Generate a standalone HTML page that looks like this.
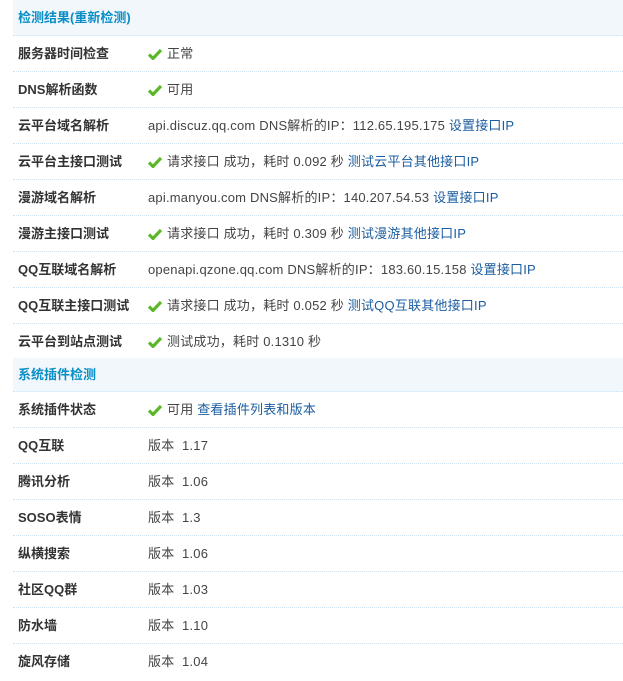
<!DOCTYPE html>
<html><head><meta charset="utf-8"><style>
body{margin:0;background:#fff;width:623px;height:681px;overflow:hidden;font-family:"Liberation Sans","Noto Sans CJK SC",sans-serif;font-size:13px;color:#444}
.wrap{position:absolute;left:13px;top:0;width:610px}
.h{background:#f2f7fc;height:36px;line-height:36px;padding-left:5px;font-weight:bold;color:#0a8ec6;border-bottom:1px dotted #cfe3f2;box-sizing:border-box}
.r{height:36px;line-height:35px;border-bottom:1px dotted #cfe3f2;box-sizing:border-box;position:relative}
.l{position:absolute;left:5px;font-weight:bold;color:#333}
.v{position:absolute;left:135px;color:#444;white-space:nowrap;letter-spacing:0.2px}
a{color:#1c5da0;text-decoration:none}
.ck{display:inline-block;width:14px;height:12px;vertical-align:-2px;margin-right:5px}
</style></head><body><div class="wrap">
<div class="h">检测结果(重新检测)</div>
<div class="r"><span class="l">服务器时间检查</span><span class="v"><svg class="ck" viewBox="0 0 14 12"><path d="M1 6.5L5 10.5L13 2" stroke="#5cb82a" stroke-width="3.2" fill="none"/></svg>正常</span></div>
<div class="r"><span class="l">DNS解析函数</span><span class="v"><svg class="ck" viewBox="0 0 14 12"><path d="M1 6.5L5 10.5L13 2" stroke="#5cb82a" stroke-width="3.2" fill="none"/></svg>可用</span></div>
<div class="r"><span class="l">云平台域名解析</span><span class="v">api.discuz.qq.com DNS解析的IP：112.65.195.175 <a>设置接口IP</a></span></div>
<div class="r"><span class="l">云平台主接口测试</span><span class="v"><svg class="ck" viewBox="0 0 14 12"><path d="M1 6.5L5 10.5L13 2" stroke="#5cb82a" stroke-width="3.2" fill="none"/></svg>请求接口 成功，耗时 0.092 秒 <a>测试云平台其他接口IP</a></span></div>
<div class="r"><span class="l">漫游域名解析</span><span class="v">api.manyou.com DNS解析的IP：140.207.54.53 <a>设置接口IP</a></span></div>
<div class="r"><span class="l">漫游主接口测试</span><span class="v"><svg class="ck" viewBox="0 0 14 12"><path d="M1 6.5L5 10.5L13 2" stroke="#5cb82a" stroke-width="3.2" fill="none"/></svg>请求接口 成功，耗时 0.309 秒 <a>测试漫游其他接口IP</a></span></div>
<div class="r"><span class="l">QQ互联域名解析</span><span class="v">openapi.qzone.qq.com DNS解析的IP：183.60.15.158 <a>设置接口IP</a></span></div>
<div class="r"><span class="l">QQ互联主接口测试</span><span class="v"><svg class="ck" viewBox="0 0 14 12"><path d="M1 6.5L5 10.5L13 2" stroke="#5cb82a" stroke-width="3.2" fill="none"/></svg>请求接口 成功，耗时 0.052 秒 <a>测试QQ互联其他接口IP</a></span></div>
<div class="r" style="height:34px;border:none"><span class="l">云平台到站点测试</span><span class="v"><svg class="ck" viewBox="0 0 14 12"><path d="M1 6.5L5 10.5L13 2" stroke="#5cb82a" stroke-width="3.2" fill="none"/></svg>测试成功，耗时 0.1310 秒</span></div>
<div class="h" style="height:34px;line-height:34px">系统插件检测</div>
<div class="r"><span class="l">系统插件状态</span><span class="v"><svg class="ck" viewBox="0 0 14 12"><path d="M1 6.5L5 10.5L13 2" stroke="#5cb82a" stroke-width="3.2" fill="none"/></svg>可用 <a>查看插件列表和版本</a></span></div>
<div class="r"><span class="l">QQ互联</span><span class="v">版本&nbsp; 1.17</span></div>
<div class="r"><span class="l">腾讯分析</span><span class="v">版本&nbsp; 1.06</span></div>
<div class="r"><span class="l">SOSO表情</span><span class="v">版本&nbsp; 1.3</span></div>
<div class="r"><span class="l">纵横搜索</span><span class="v">版本&nbsp; 1.06</span></div>
<div class="r"><span class="l">社区QQ群</span><span class="v">版本&nbsp; 1.03</span></div>
<div class="r"><span class="l">防水墙</span><span class="v">版本&nbsp; 1.10</span></div>
<div class="r" style="border:none"><span class="l">旋风存储</span><span class="v">版本&nbsp; 1.04</span></div>
</div></body></html>
